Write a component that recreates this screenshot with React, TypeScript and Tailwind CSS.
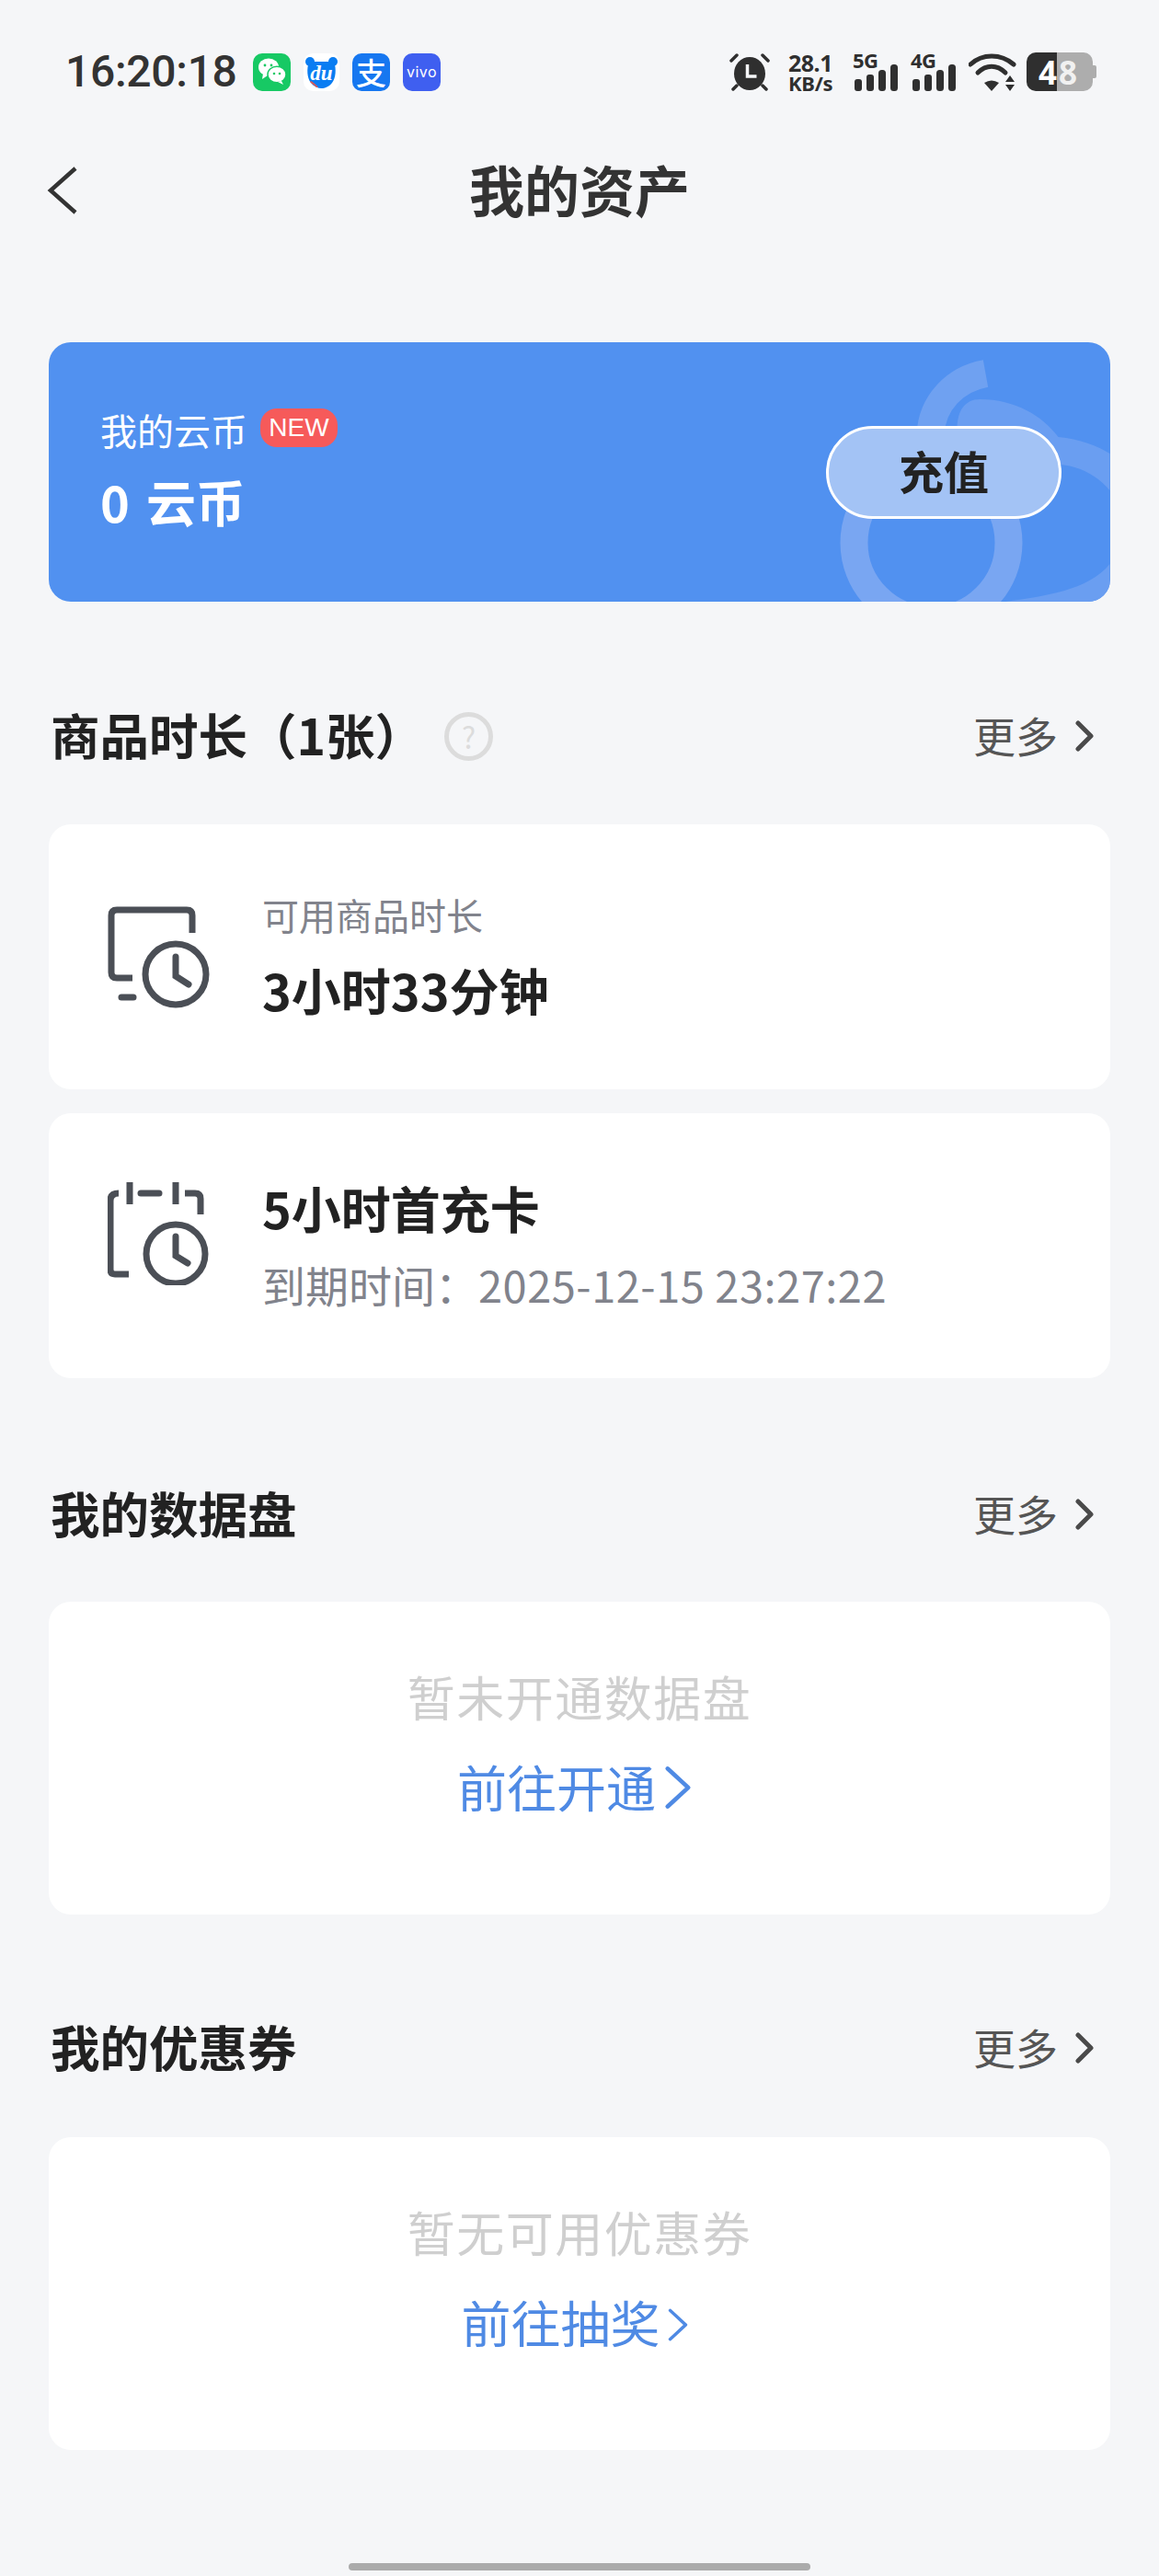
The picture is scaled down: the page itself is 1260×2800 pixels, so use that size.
import React from "react";

const cjk = "font-['Noto_Sans_CJK_SC','Noto_Sans',sans-serif]";

function Chevron({ className, strokeWidth = 5 }: { className: string; strokeWidth?: number }) {
  return (
    <svg className={className} viewBox="0 0 20 34" fill="none" preserveAspectRatio="none">
      <path d="M3 3l14 14L3 31" stroke="currentColor" strokeWidth={strokeWidth} strokeLinecap="round" strokeLinejoin="round" />
    </svg>
  );
}

function WeChatIcon() {
  return (
    <div className="w-[41px] h-[41px] rounded-[10px] bg-[#17c964] flex items-center justify-center">
      <svg className="w-[34px] h-[34px]" viewBox="0 0 34 34">
        <ellipse cx="13" cy="12" rx="11" ry="9.5" fill="#fff" />
        <path d="M7 19l-1 6 6-4z" fill="#fff" />
        <ellipse cx="22" cy="20" rx="10" ry="8.8" fill="#fff" stroke="#17c964" strokeWidth="1.5" />
        <path d="M27 27l2 4-6-3z" fill="#fff" />
        <circle cx="9" cy="10" r="1.4" fill="#17c964" />
        <circle cx="16" cy="10" r="1.4" fill="#17c964" />
        <circle cx="19" cy="19" r="1.3" fill="#17c964" />
        <circle cx="25" cy="19" r="1.3" fill="#17c964" />
      </svg>
    </div>
  );
}

function BaiduIcon() {
  return (
    <div className="relative w-[39px] h-[41px] rounded-[10px] bg-white flex items-center justify-center overflow-hidden">
      <svg className="w-[37px] h-[37px]" viewBox="0 0 37 37">
        <circle cx="6" cy="7" r="5" fill="#0a7df2" />
        <circle cx="31" cy="7" r="5" fill="#0a7df2" />
        <path d="M5 7h27c3 8 2 18-2 23-3 4-8 6-11.500 6S10 34 7 30C3 25 2 15 5 7z" fill="#0a7df2" />
        <path d="M7 28c3 2 6 4 8 7l-2 0c-2-2-5-4-7-6z" fill="#e0564f" />
      </svg>
      <span className="absolute inset-0 flex items-center justify-center pt-[2px] font-['Liberation_Serif',serif] italic font-bold text-[23px] text-white leading-none">du</span>
    </div>
  );
}

function AlipayIcon() {
  return (
    <div className={`w-[41px] h-[41px] rounded-[10px] bg-[#1677f0] flex items-center justify-center text-white text-[33px] font-medium leading-none ${cjk}`}>
      支
    </div>
  );
}

function VivoIcon() {
  return (
    <div className="w-[41px] h-[41px] rounded-[10px] bg-[#3f5ff0] flex items-center justify-center text-white text-[16px] tracking-[0.5px] leading-none font-['Inter',sans-serif]">
      vivo
    </div>
  );
}

function AlarmIcon() {
  return (
    <svg className="w-[44px] h-[42px]" viewBox="0 0 44 42" fill="none">
      <path d="M2 9l6-6M42 9l-6-6" stroke="#2f2f2f" strokeWidth="3.500" strokeLinecap="round" />
      <path d="M8 36l-4 4M36 36l4 4" stroke="#2f2f2f" strokeWidth="3.500" strokeLinecap="round" />
      <ellipse cx="22" cy="23" rx="17" ry="18" fill="#2f2f2f" />
      <path d="M19.500 13v13h10" stroke="#f5f6f8" strokeWidth="3.500" />
    </svg>
  );
}

function Signal({ label }: { label: string }) {
  return (
    <div className="flex flex-col w-[50px] h-[42px]">
      <span className="font-['Noto_Sans',sans-serif] font-bold text-[22px] leading-[16px] text-[#2f2f2f] tracking-[-0.5px]">{label}</span>
      <svg className="w-[50px] h-[29px] -mt-[3px]" viewBox="0 0 50 29">
        <rect x="2" y="16" width="8" height="13" rx="3" fill="#2f2f2f" />
        <rect x="15" y="11" width="8" height="18" rx="3" fill="#2f2f2f" />
        <rect x="28" y="6" width="8" height="23" rx="3.500" fill="#2f2f2f" />
        <rect x="41" y="0" width="8" height="29" rx="3.500" fill="#2f2f2f" />
      </svg>
    </div>
  );
}

function WifiIcon() {
  return (
    <svg className="w-[52px] h-[42px]" viewBox="0 0 52 42" fill="none">
      <path d="M2 13C15 1 35 1 49 13" stroke="#2f2f2f" strokeWidth="5" strokeLinecap="round" />
      <path d="M10 22C19 13 31 13 40 22" stroke="#2f2f2f" strokeWidth="5" strokeLinecap="round" />
      <path d="M25 42l-8-9q8-5 16 0z" fill="#2f2f2f" />
      <path d="M45 25l5 7H40zM40 35h10l-5 7z" fill="#2f2f2f" />
    </svg>
  );
}

function Battery() {
  return (
    <div className="relative flex w-[72px] h-[42px] mr-[4px] font-['Noto_Sans',sans-serif] font-bold text-[35px] leading-none text-white">
      <div className="w-[33px] h-full bg-[#2f2f2f] rounded-l-[10px] flex items-center justify-end">4</div>
      <div className="w-[39px] h-full bg-[#adadad] rounded-r-[10px] flex items-center pl-[2px]">
        <span className="text-[#f1f1f1]">8</span>
      </div>
      <div className="absolute -right-[4px] top-[14px] w-[4px] h-[14px] bg-[#adadad] rounded-r-[2px]" />
    </div>
  );
}

function StatusBar() {
  return (
    <div className="flex items-center justify-between h-[42px] mt-[57px] pl-[71px] pr-[68px]">
      <div className="flex items-center">
        <span className="font-['Roboto',sans-serif] font-medium text-[48px] tracking-[-0.3px] leading-none text-[#333] w-[204px]">16:20:18</span>
        <div className="flex items-center gap-[14px]">
          <WeChatIcon />
          <BaiduIcon />
          <AlipayIcon />
          <VivoIcon />
        </div>
      </div>
      <div className="flex items-center">
        <AlarmIcon />
        <div className="ml-[20px] w-[49px] flex flex-col font-['Noto_Sans',sans-serif] font-bold text-[#2f2f2f] leading-none">
          <span className="text-[25px] leading-[24px] tracking-[-0.5px]">28.1</span>
          <span className="text-[22px] leading-[20px] tracking-[-0.3px]">KB/s</span>
        </div>
        <div className="ml-[21px]"><Signal label="5G" /></div>
        <div className="ml-[13px]"><Signal label="4G" /></div>
        <div className="ml-[13px]"><WifiIcon /></div>
        <div className="ml-[11px]"><Battery /></div>
      </div>
    </div>
  );
}

function SectionHeader({ title, help }: { title: string; help?: boolean }) {
  return (
    <div className="flex items-center justify-between h-[60px] pl-[55px] pr-[71px]">
      <div className="flex items-center">
        <span className="text-[53.500px] font-bold leading-none text-[#222] pb-[4px]">{title}</span>
        {help && (
          <div className="ml-[22px] w-[53px] h-[53px] rounded-full border-[5px] border-[#dcdcdc] flex items-center justify-center text-[32px] leading-none text-[#dcdcdc]">
            ?
          </div>
        )}
      </div>
      <div className="flex items-center text-[#555]">
        <span className="text-[46px] leading-none pb-[4px]">更多</span>
        <Chevron className="ml-[19px] w-[20px] h-[34px] text-[#4a4a4a]" />
      </div>
    </div>
  );
}

function MonitorClockIcon() {
  return (
    <svg className="w-[112px] h-[112px] mt-[2px]" viewBox="0 0 112 112" fill="none" stroke="#4b4f56" strokeWidth="7" strokeLinecap="round">
      <path d="M92 29V10q0-6-6-6H10q-6 0-6 6v62q0 6 6 6h17" strokeLinecap="butt" />
      <path d="M15 99h13" />
      <circle cx="74" cy="74" r="33" />
      <path d="M74 55v21l14 9" />
    </svg>
  );
}

function CalendarClockIcon() {
  return (
    <svg className="w-[112px] h-[112px] mb-[26px]" viewBox="0 0 112 112" fill="none" stroke="#4b4f56" strokeWidth="7" strokeLinecap="round">
      <path d="M12 12q-9 0-9 8v75q0 5 5 5h15" strokeLinecap="butt" />
      <path d="M24 0v24M74 0v24" strokeLinecap="butt" />
      <path d="M36 12h20" />
      <path d="M84 12h11q6 0 6 6v17" strokeLinecap="butt" />
      <circle cx="74" cy="78" r="32" />
      <path d="M74 59v21l13 8" />
    </svg>
  );
}

function EmptyCard({ tip, link, narrowArrow }: { tip: string; link: string; narrowArrow?: boolean }) {
  return (
    <div className="h-[340px] mx-[53px] bg-white rounded-[24px] flex flex-col items-center pt-[75px]">
      <span className="text-[52px] leading-[56px] text-[#cfcfcf] tracking-[1.500px]">{tip}</span>
      <div className="flex items-center mt-[43px] mr-[10px] h-[56px] text-[#4f8ae4]">
        <span className="text-[54px] leading-none pb-[2px]">{link}</span>
        {narrowArrow ? (
          <Chevron className="ml-[7px] mt-[4px] w-[24px] h-[38px]" strokeWidth={3} />
        ) : (
          <Chevron className="ml-[8px] w-[32px] h-[50px]" strokeWidth={3} />
        )}
      </div>
    </div>
  );
}

export default function App() {
  return (
    <div className={`relative w-[1260px] h-[2800px] bg-[#f5f6f8] flex flex-col overflow-hidden ${cjk}`}>
      <StatusBar />

      {/* Header */}
      <div className="relative h-[216px] flex items-center justify-center">
        <svg className="absolute left-[51px] top-[82px] w-[34px] h-[52px]" viewBox="0 0 34 52" fill="none">
          <path d="M31 2L4 26l27 24" stroke="#333" strokeWidth="4.500" />
        </svg>
        <span className="text-[60px] font-bold leading-none text-[#333] pb-[4px]">我的资产</span>
      </div>

      {/* Cloud coin card */}
      <div className="relative mt-[57px] mx-[53px] h-[282px] bg-[#5191f0] rounded-[24px] overflow-hidden flex items-center justify-between pl-[56px] pr-[53px]">
        <svg className="absolute inset-0 w-full h-full" viewBox="0 0 1153 282" fill="none">
          <circle cx="959" cy="218" r="84" stroke="#79a6f2" strokeWidth="30" />
          <path d="M1018 34C985 40 960 65 958 100" stroke="#6fa1f1" strokeWidth="30" />
          <path d="M987 95C987 75 995 62 1012 62C1050 62 1080 80 1097 103C1120 105 1140 113 1153 121V161C1140 145 1120 135 1100 133L1050 160L987 120Z" fill="#6a9ef1" />
          <path d="M1040 282C1080 276 1130 270 1153 241V282Z" fill="#6a9ef1" />
        </svg>
        <div className="relative flex flex-col text-white pb-[8px]">
          <div className="flex items-center">
            <span className="text-[40px] leading-none">我的云币</span>
            <span className="ml-[14px] -mt-[4px] w-[84px] h-[42px] rounded-[18px] bg-[#f65a5a] flex items-center justify-center text-[28px] leading-none font-['Liberation_Sans',sans-serif]">NEW</span>
          </div>
          <div className="mt-[31px] flex text-[54px] font-bold leading-none">
            <span>0</span>
            <span className="ml-[18px]">云币</span>
          </div>
        </div>
        <div className="relative w-[256px] h-[101px] rounded-full border-[3px] border-white bg-[#a3c3f5] flex items-center justify-center text-[49px] font-bold leading-none text-[#222] pb-[6px]">
          充值
        </div>
      </div>

      <div className="mt-[116px]"><SectionHeader title={"商品时长\uFF081张\uFF09"} help /></div>

      {/* Remaining time */}
      <div className="mt-[66px] h-[288px] mx-[53px] bg-white rounded-[24px] flex items-center pl-[64px]">
        <MonitorClockIcon />
        <div className="ml-[56px] flex flex-col pb-[3px]">
          <span className="text-[40px] leading-none text-[#81838c]">可用商品时长</span>
          <span className="mt-[35px] text-[54px] font-bold leading-none text-[#222]">3小时33分钟</span>
        </div>
      </div>

      <div className="mt-[26px] h-[288px] mx-[53px] bg-white rounded-[24px] flex items-center pl-[64px]">
        <CalendarClockIcon />
        <div className="ml-[56px] flex flex-col pb-[3px]">
          <span className="text-[54px] font-bold leading-none text-[#222]">5小时首充卡</span>
          <span className="mt-[32px] text-[47px] leading-none text-[#81838c]">
            {"到期时间\uFF1A"}<span className="tracking-[0.5px]">2025-12-15 23:27:22</span>
          </span>
        </div>
      </div>

      <div className="mt-[118px]"><SectionHeader title="我的数据盘" /></div>
      <div className="mt-[65px]"><EmptyCard tip="暂未开通数据盘" link="前往开通" /></div>

      <div className="mt-[115px]"><SectionHeader title="我的优惠券" /></div>
      <div className="mt-[67px]"><EmptyCard tip="暂无可用优惠券" link="前往抽奖" narrowArrow /></div>

      {/* Home indicator */}
      <div className="mt-[123px] mx-auto w-[502px] h-[8px] rounded-full bg-[#ababab]" />
    </div>
  );
}
